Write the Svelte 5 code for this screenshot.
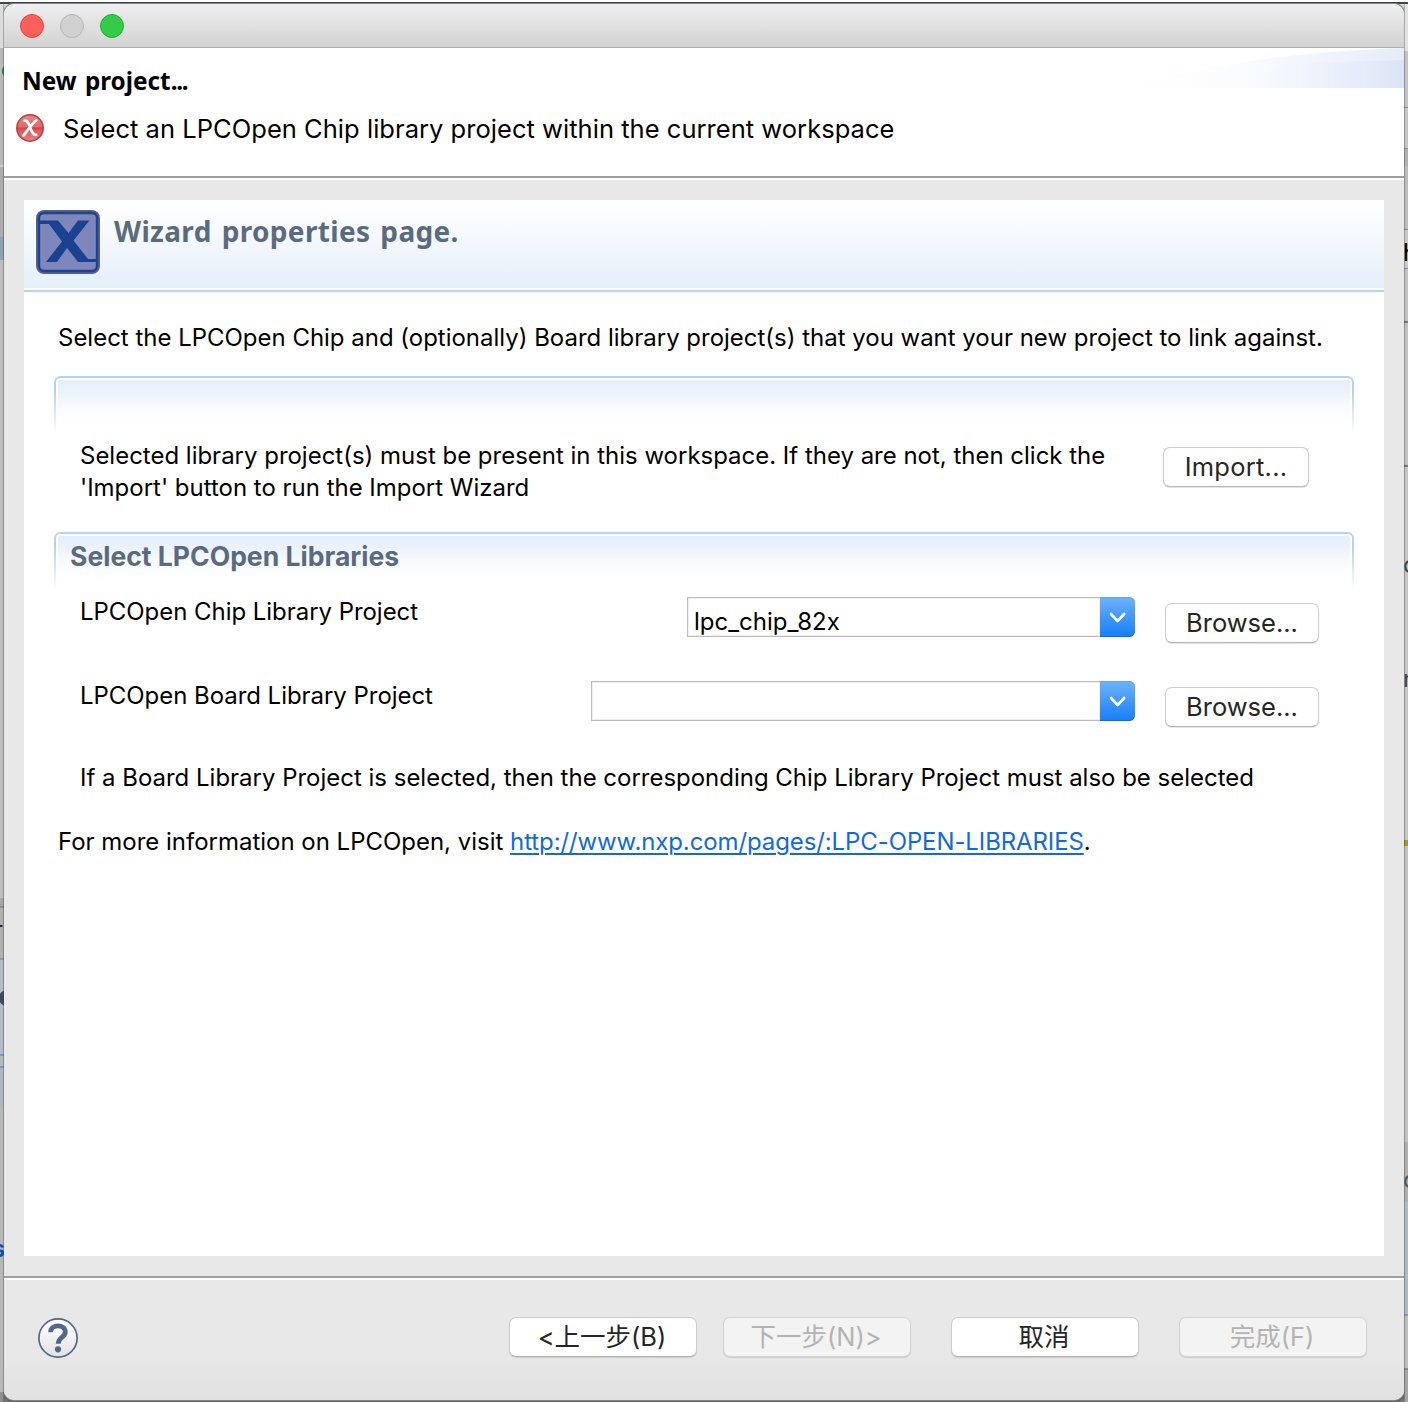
<script>
  const libraries = [
    { label: 'LPCOpen Chip Library Project', value: 'lpc_chip_82x', size: 'narrow' },
    { label: 'LPCOpen Board Library Project', value: '', size: 'wide' }
  ];

  // Slices of the application window visible on each side of the dialog.
  const leftEdge = [
    { height: 44, color: '#dcdcdc' },
    { height: 117, color: '#b9b9b9' },
    { height: 2, color: '#cfcfcf' },
    { height: 70, color: '#adadad' },
    { height: 23, color: '#8fa0b0' },
    { height: 638, color: '#bebebe' },
    { height: 8, color: '#a8a8a8' },
    { height: 2, color: '#8c8c8c' },
    { height: 50, color: '#b0b0b0' },
    { height: 2, color: '#9598a8' },
    { height: 94, color: '#b4bcc4' },
    { height: 2, color: '#7f9cc0' },
    { height: 10, color: '#b8b8b8' },
    { height: 2, color: '#7f9cc0' },
    { height: 40, color: '#aeb7c0' },
    { height: 284, color: '#b8b8b8' },
    { height: 10, color: '#909090' }
  ];
  const rightEdge = [
    { height: 47, color: '#e2e2e2' },
    { height: 56, color: '#c4c4c4' },
    { height: 1, color: '#8b8b8b' },
    { height: 40, color: '#c6c6c6' },
    { height: 1, color: '#8b8b8b' },
    { height: 17, color: '#b0b0b0' },
    { height: 63, color: '#bdbdbd' },
    { height: 1, color: '#8b8b8b' },
    { height: 38, color: '#c9c9c9' },
    { height: 1, color: '#8b8b8b' },
    { height: 52, color: '#c2c2c2' },
    { height: 2, color: '#777' },
    { height: 142, color: '#c2c2c2' },
    { height: 2, color: '#777' },
    { height: 373, color: '#c6c6c6' },
    { height: 6, color: '#a39b22' },
    { height: 296, color: '#c2c2c2' },
    { height: 60, color: '#b0b0b0' },
    { height: 112, color: '#b2bac2' },
    { height: 2, color: '#7f9cc0' },
    { height: 52, color: '#bebebe' },
    { height: 2, color: '#8b8b8b' },
    { height: 32, color: '#a5a5a5' }
  ];
</script>

{#snippet chevron()}
  <svg class="chevron" viewBox="0 0 35 40" aria-hidden="true">
    <path d="M11 17 L17.6 24 L24.2 17" fill="none" stroke="#fff" stroke-width="2.6" stroke-linecap="round" stroke-linejoin="round" />
  </svg>
{/snippet}

<div class="desktop">
  <div class="edge left" aria-hidden="true">
    {#each leftEdge as slice}
      <i style="height:{slice.height}px;background:{slice.color}"></i>
    {/each}
    <b class="dot green"></b>
    <b class="dot slate"></b>
    <span class="bit type">T</span>
    <span class="bit link">s</span>
  </div>

  <section class="window">
    <div class="titlebar">
      <span class="light close"></span>
      <span class="light minimize"></span>
      <span class="light zoom"></span>
    </div>

    <header class="header">
      <svg class="swoosh" viewBox="0 0 290 40" aria-hidden="true">
        <defs>
          <linearGradient id="sw1"><stop offset="0" stop-color="#fff" /><stop offset="0.4" stop-color="#fafcff" /><stop offset="1" stop-color="#e6edf9" /></linearGradient>
          <linearGradient id="sw2"><stop offset="0.3" stop-color="#fafcff" stop-opacity="0" /><stop offset="1" stop-color="#dbe4f6" /></linearGradient>
        </defs>
        <path d="M12 40 C90 16 190 3 290 0 V40 Z" fill="url(#sw1)" />
        <path d="M100 26 C170 14 230 14 290 12 V40 H50 Z" fill="url(#sw2)" />
      </svg>
      <h1>New project<span class="dots">...</span></h1>
      <div class="message">
        <svg class="error" viewBox="0 0 28 28" aria-hidden="true">
          <defs>
            <linearGradient id="err" x2="0" y2="1"><stop offset="0" stop-color="#e58a88" /><stop offset="0.46" stop-color="#dd6a6a" /><stop offset="0.5" stop-color="#cf4046" /><stop offset="0.58" stop-color="#d9575a" /><stop offset="1" stop-color="#e58785" /></linearGradient>
          </defs>
          <circle cx="14" cy="14" r="13.2" fill="url(#err)" stroke="#c5383c" stroke-width="1.5" />
          <path d="M8.6 6.6 C11.5 6.4 12.5 9 14 13 C15.8 18.2 17 21.4 20.2 20.9 M20.4 6.4 C16.5 8.5 11 17.5 7.4 21.6" fill="none" stroke="#fff" stroke-width="2.6" stroke-linecap="round" />
        </svg>
        <p>Select an LPCOpen Chip library project within the current workspace</p>
      </div>
    </header>

    <main class="body">
      <div class="form">
        <div class="banner">
          <svg class="logo" viewBox="0 0 64 64" aria-hidden="true">
            <rect x="1" y="1" width="62" height="62" rx="7" fill="#7f86bb" stroke="#5b6289" stroke-width="2" />
            <rect x="3" y="3" width="58" height="58" rx="5" fill="none" stroke="#1c4290" stroke-width="2.4" />
            <path d="M4 10.5 H22 L32.5 23 L42 10.5 H53.5 L37.5 30.5 L52 49 H61 V52 H42 L31 38 L21 52 H10 L26 31.5 L13 14 H4 Z" fill="#1b4291" />
          </svg>
          <h2>Wizard properties page.</h2>
        </div>

        <div class="content">
          <p class="intro">Select the LPCOpen Chip and (optionally) Board library project(s) that you want your new project to link against.</p>

          <section class="group importing">
            <p class="note">Selected library project(s) must be present in this workspace. If they are not, then click the<br />'Import' button to run the Import Wizard</p>
            <button class="button import">Import...</button>
          </section>

          <section class="group">
            <h3>Select LPCOpen Libraries</h3>
            {#each libraries as library}
              <div class="row">
                <span class="label">{library.label}</span>
                <div class="combo {library.size}">
                  <span class="value">{library.value}</span>
                  <span class="arrow">{@render chevron()}</span>
                </div>
                <button class="button browse">Browse...</button>
              </div>
            {/each}
            <p class="hint">If a Board Library Project is selected, then the corresponding Chip Library Project must also be selected</p>
          </section>

          <p class="more">For more information on LPCOpen, visit <a href="#lpcopen">http://www.nxp.com/pages/:LPC-OPEN-LIBRARIES</a>.</p>
        </div>
      </div>
    </main>

    <footer class="footer">
      <svg class="help" viewBox="0 0 40 40" aria-hidden="true">
        <defs><linearGradient id="hp" x2="0" y2="1"><stop offset="0" stop-color="#fff" /><stop offset="1" stop-color="#e2e2e2" /></linearGradient></defs>
        <circle cx="20" cy="20" r="19.1" fill="url(#hp)" stroke="#52678a" stroke-width="1.7" />
        <path d="M12.6 14.2 C12.8 5.8 27.4 5.8 27.3 14.1 C27.2 19.5 20.2 18.8 20.2 25.8" fill="none" stroke="#52678a" stroke-width="4.8" />
        <circle cx="20" cy="31.3" r="3.1" fill="#52678a" />
      </svg>
      <div class="actions">
        <div class="pager">
          <button class="button">&lt;上一步(B)</button>
          <button class="button" disabled>下一步(N)&gt;</button>
        </div>
        <button class="button">取消</button>
        <button class="button" disabled>完成(F)</button>
      </div>
    </footer>
  </section>

  <div class="edge right" aria-hidden="true">
    {#each rightEdge as slice}
      <i style="height:{slice.height}px;background:{slice.color}"></i>
    {/each}
    <span class="bit h">h</span>
    <span class="bit c1">c</span>
    <span class="bit n">n</span>
    <span class="bit c2">c</span>
  </div>
</div>

<style>
  :global(body) { margin: 0; background: #fff; }
  * { box-sizing: border-box; }
  h1, h2, h3, p { margin: 0; white-space: nowrap; }

  .desktop {
    display: grid;
    grid-template-columns: 4px 1400px 4px;
    width: 1408px;
    height: 1402px;
    padding-top: 4px;
    overflow: hidden;
    background: linear-gradient(#fff 0 2px, #3a4358 2px 4px, #dedede 4px 30px, #777 1396px);
    font-family: Inter, "Noto Sans CJK SC", sans-serif;
    color: #000;
  }

  .edge { position: relative; overflow: hidden; display: flex; flex-direction: column; height: 1398px; }
  .edge i { display: block; flex: none; box-shadow: inset -1px 0 rgba(0, 0, 0, 0.25); }
  .right i { box-shadow: inset 1px 0 rgba(0, 0, 0, 0.25); }
  .dot { position: absolute; border-radius: 50%; }
  .green { left: 2px; top: 60px; width: 14px; height: 14px; background: #1d6b45; }
  .slate { left: -1px; top: 986px; width: 16px; height: 16px; background: #3e4a5c; }
  .bit { position: absolute; font-size: 24px; line-height: 28px; color: #222; }
  .type { left: -12px; top: 917px; }
  .link { left: -8px; top: 1231px; color: #0a50b0; font-weight: 600; }
  .h { left: -1px; top: 235px; color: #000; }
  .c1 { left: -1px; top: 547px; color: #445; }
  .n { left: -1px; top: 661px; color: #445; }
  .c2 { left: -1px; top: 1162px; color: #555; }

  .window {
    display: flex;
    flex-direction: column;
    width: 1400px;
    height: 1396px;
    border-radius: 10px;
    overflow: hidden;
    background: #e8e8e8;
    box-shadow: 0 0 0 1px #858585, 0 1px 2px 1px #555;
  }

  .titlebar {
    display: flex;
    align-items: center;
    gap: 16px;
    height: 44px;
    padding-left: 16px;
    border-bottom: 1px solid #b0b0b0;
    background: linear-gradient(#efefef, #d2d2d2);
  }
  .light { width: 24px; height: 24px; border-radius: 50%; border: 1px solid; }
  .close { background: #fd5f5b; border-color: #e2453f; }
  .minimize { background: #d1d1d1; border-color: #b4b4b4; }
  .zoom { background: #34cb48; border-color: #23ab33; }

  .header {
    position: relative;
    height: 132px;
    padding: 16px 0 0 12px;
    background: linear-gradient(#fff 128px, #9f9f9f 128px 130px, #fff 130px);
  }
  .swoosh { position: absolute; right: 0; top: 0; width: 290px; height: 40px; }
  h1 { padding-left: 6px; font: 700 24.3px/34px "Noto Sans", sans-serif; word-spacing: 2px; }
  .dots { letter-spacing: -1.3px; }
  .message { display: flex; align-items: center; gap: 19px; height: 28px; margin-top: 16px; }
  .error { width: 28px; height: 28px; }
  .message p { padding-top: 2px; font-size: 25.5px; line-height: 32px; letter-spacing: 0.035px; }

  .body { height: 1096px; padding: 20px; }
  .form { height: 1056px; background: #fff; }
  .banner {
    display: flex;
    gap: 14px;
    height: 92px;
    padding: 10px 12px 0;
    background: linear-gradient(#fff 0, #f2f7fd 45px, #e4effa 88px, #fff 88px 90px, #b4d2f1 90px);
  }
  .logo { width: 64px; height: 64px; }
  h2 { font: 700 28px/42px "Noto Sans", sans-serif; letter-spacing: 0.33px; word-spacing: 2.4px; color: #5a6b80; }

  .content { padding: 30px 30px 0; font-size: 23.97px; }
  .intro, .more { padding-left: 4px; line-height: 32px; }

  .group {
    position: relative;
    margin-top: 22px;
    padding: 4px 35px 0 26px;
  }
  .group::before {
    content: "";
    position: absolute;
    inset: 0 0 auto;
    height: 56px;
    border: 2px solid #b4d2f1;
    border-bottom: 0;
    border-radius: 6px 6px 0 0;
    background: linear-gradient(#e3edfa, #fff 48px);
    box-shadow: inset 0 0 0 2px #fff;
    mask-image: linear-gradient(#000 16px, transparent);
  }
  .importing { display: flex; justify-content: space-between; height: 134px; padding: 64px 45px 0 26px; }
  .note { line-height: 32px; }
  h3 { position: relative; margin-left: -10px; font-size: 26.55px; font-weight: 700; line-height: 40px; color: #5a6b80; }

  .row { display: flex; height: 84px; padding-top: 21px; }
  .label { flex: 1; padding-top: 1px; line-height: 28px; letter-spacing: -0.03px; white-space: nowrap; }
  .combo { display: flex; height: 40px; margin-right: 30px; }
  .narrow { width: 448px; }
  .wide { width: 544px; }
  .value { flex: 1; padding: 9px 6px 0; border: 1px solid #bcbcbc; border-right: 0; line-height: 30px; box-shadow: inset 0 0 0 1px #f0f0f0; }
  .arrow { width: 35px; border-radius: 0 6px 6px 0; background: linear-gradient(#6fb3fa, #157efb); box-shadow: inset 0 -1px #0f68e8, inset 0 1px #5fa5f2; }
  .chevron { display: block; width: 35px; height: 40px; }

  .button {
    height: 40px;
    padding: 0;
    border: 1px solid #cdcdcd;
    border-bottom-color: #b4b4b4;
    border-radius: 7px;
    background: #fff;
    box-shadow: 0 1px 1px rgba(0, 0, 0, 0.12);
    font: 25.5px/36px Inter, "Noto Sans CJK SC", sans-serif;
    color: #262626;
    white-space: nowrap;
  }
  .import { width: 146px; margin-top: 7px; letter-spacing: 0.25px; }
  .browse { width: 154px; margin-top: 6px; }
  .hint { margin-top: 18px; line-height: 32px; }
  .more { margin-top: 32px; }
  a { color: #136ad6; letter-spacing: -0.09px; text-decoration: underline; text-underline-offset: 3px; text-decoration-thickness: 2px; }

  .footer {
    display: flex;
    justify-content: space-between;
    height: 124px;
    padding: 41px 37px 0 34px;
    background: linear-gradient(#9f9f9f 0 2px, #fff 2px 4px, #e8e8e8 4px 80px, #e1e1e1);
  }
  .help { width: 40px; height: 40px; margin-top: 1px; }
  .actions { display: flex; gap: 40px; }
  .pager { display: flex; gap: 26px; }
  .actions .button { width: 188px; padding-right: 2px; }
  .actions .button:disabled { background: #f3f3f3; border-color: #d2d2d2; color: #b3b3b3; }
</style>
